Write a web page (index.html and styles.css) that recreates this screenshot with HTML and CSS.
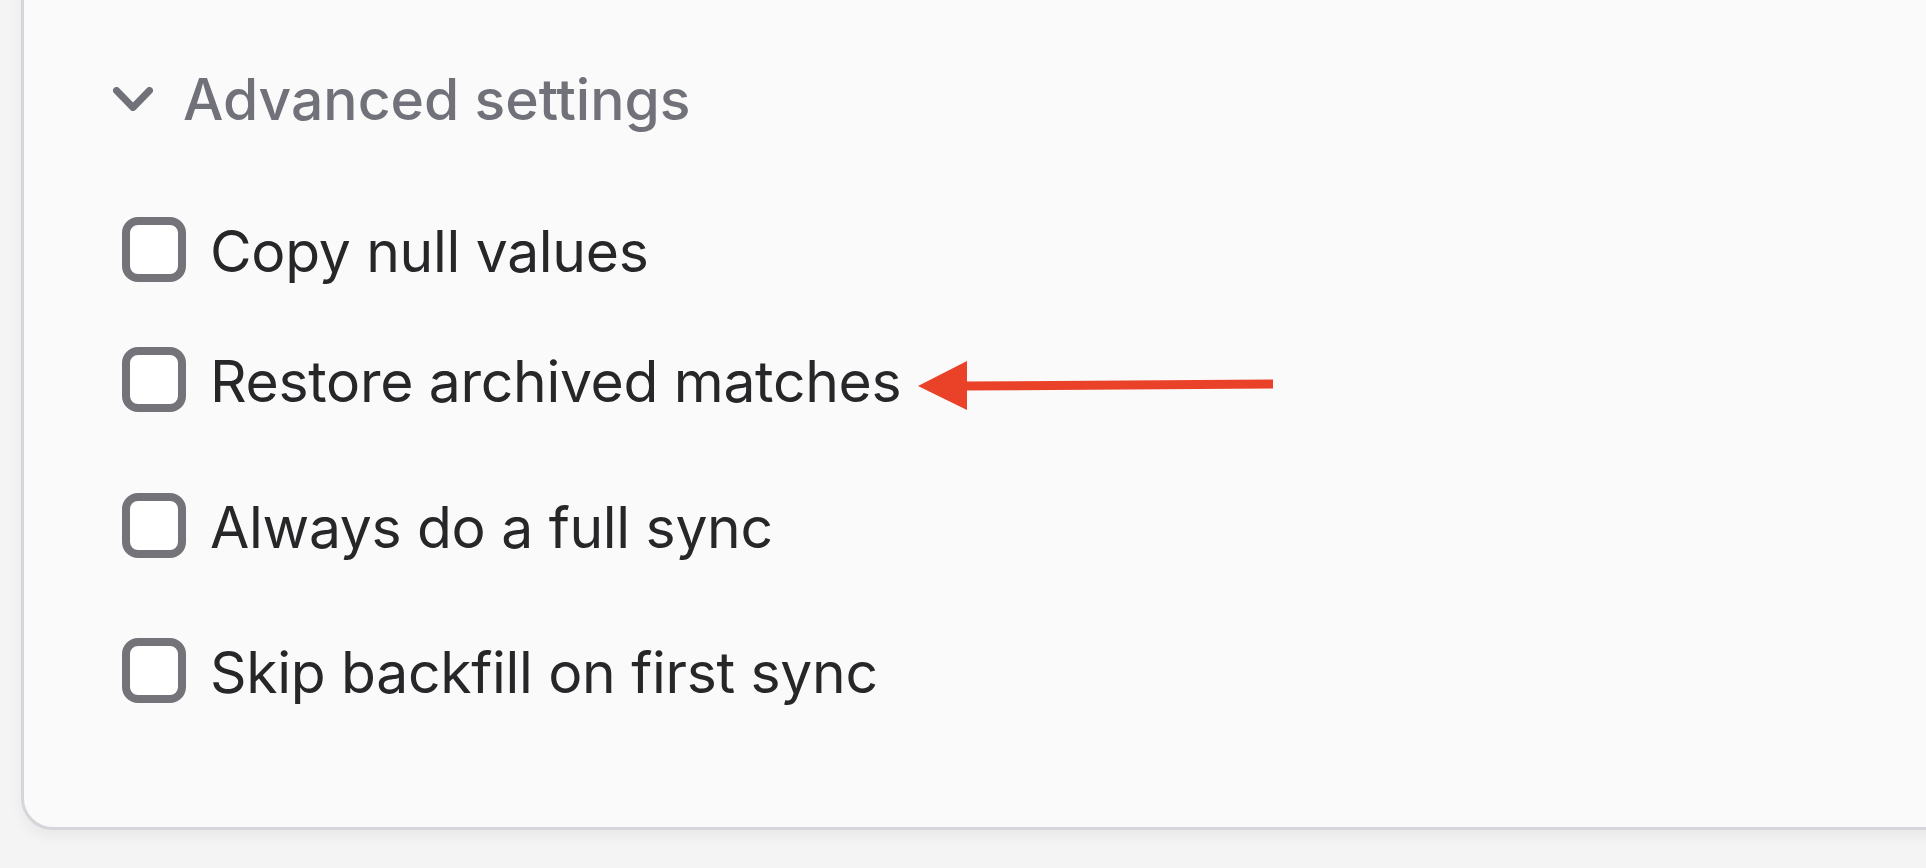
FILE: index.html
```html
<!DOCTYPE html>
<html lang="en">
<head>
<meta charset="utf-8">
<title>Advanced settings</title>
<link rel="stylesheet" href="styles.css">
</head>
<body>
  <section class="card">
    <div class="section-title">
      <svg class="chevron" width="40" height="24" viewBox="0 0 40 24" aria-hidden="true">
        <polyline points="3.5,3.5 20,20.5 36.5,3.5" fill="none" stroke="#71717a" stroke-width="7" stroke-linecap="round" stroke-linejoin="round"/>
      </svg>
      <span class="title-text">Advanced settings</span>
    </div>
    <div class="options">
      <div class="group group-a">
        <label class="option"><span class="box"></span><span class="label">Copy null values</span></label>
        <label class="option"><span class="box"></span><span class="label">Restore archived matches</span></label>
      </div>
      <div class="group group-b">
        <label class="option"><span class="box"></span><span class="label">Always do a full sync</span></label>
        <label class="option"><span class="box"></span><span class="label">Skip backfill on first sync</span></label>
      </div>
    </div>
  </section>
  <svg class="annotation" width="1926" height="868" viewBox="0 0 1926 868" aria-hidden="true">
    <line x1="962" y1="386" x2="1273" y2="384" stroke="#ea4129" stroke-width="9"/>
    <polygon points="918,386 967,361 967,410" fill="#ea4129"/>
  </svg>
</body>
</html>
```
FILE: styles.css
```css
html, body {
  margin: 0;
  padding: 0;
}
body {
  width: 1926px;
  height: 868px;
  overflow: hidden;
  background: #f4f4f5;
  font-family: Inter, "Noto Sans", "Liberation Sans", sans-serif;
  position: relative;
}
.card {
  box-sizing: border-box;
  margin: -40px 0 0 21px;
  width: 1960px;
  height: 870px;
  background: #fafafa;
  border: 3px solid #d6d5db;
  border-radius: 32px;
  box-shadow: 0 6px 14px rgba(0, 0, 0, 0.05);
  padding: 100px 0 0 89px;
}
.section-title {
  display: flex;
  align-items: center;
  gap: 30px;
  height: 72px;
}
.chevron {
  display: block;
  flex: none;
}
.title-text {
  font-size: 57px;
  line-height: 72px;
  font-weight: 500;
  color: #71717a;
  padding-top: 1px;
}
.options {
  margin-top: 82px;
  padding-left: 9px;
  display: flex;
  flex-direction: column;
  gap: 81px;
}
.group {
  display: flex;
  flex-direction: column;
}
.group-a { gap: 65px; }
.group-b { gap: 80px; }
.option {
  display: flex;
  align-items: flex-start;
  gap: 24px;
  height: 65px;
}
.box {
  box-sizing: border-box;
  flex: none;
  width: 64px;
  height: 65px;
  border: 8px solid #737379;
  border-radius: 16px;
  background: #ffffff;
}
.label {
  margin-top: 5px;
  font-size: 57px;
  line-height: 60px;
  font-weight: 400;
  letter-spacing: -0.3px;
  color: #27272a;
  white-space: nowrap;
}
.annotation {
  position: absolute;
  left: 0;
  top: 0;
  pointer-events: none;
}
```
